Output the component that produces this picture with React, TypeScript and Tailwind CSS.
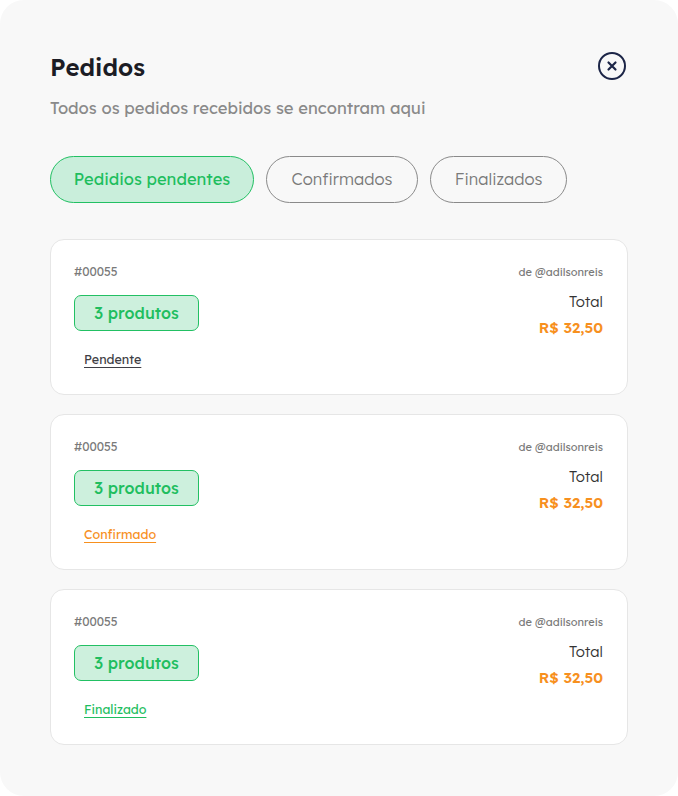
import React from "react";

type Status = "pendente" | "confirmado" | "finalizado";

const ORDERS: { id: string; user: string; items: number; total: string; status: Status }[] = [
  { id: "#00055", user: "@adilsonreis", items: 3, total: "R$ 32,50", status: "pendente" },
  { id: "#00055", user: "@adilsonreis", items: 3, total: "R$ 32,50", status: "confirmado" },
  { id: "#00055", user: "@adilsonreis", items: 3, total: "R$ 32,50", status: "finalizado" },
];

const STATUS_LABEL: Record<Status, string> = {
  pendente: "Pendente",
  confirmado: "Confirmado",
  finalizado: "Finalizado",
};

const STATUS_CLASS: Record<Status, string> = {
  pendente: "text-[#3f3f46]",
  confirmado: "text-[#f7901e]",
  finalizado: "text-[#1fbe5f]",
};

function CloseIcon() {
  return (
    <svg width="30" height="30" viewBox="0 0 30 30" fill="none">
      <circle cx="15" cy="15" r="13" stroke="#1c2547" strokeWidth="2" />
      <path d="M11.5 11.5l7 7M18.5 11.5l-7 7" stroke="#1c2547" strokeWidth="2.2" strokeLinecap="round" />
    </svg>
  );
}

function OrderCard({ order }: { order: (typeof ORDERS)[number] }) {
  return (
    <div className="flex justify-between rounded-[14px] border border-[#e6e6e6] bg-white pl-[23px] pr-6 pt-[24px] pb-[27px]">
      {/* Left */}
      <div className="flex flex-col items-start">
        <span className="text-[12px] leading-4 text-[#7a7a7a]">{order.id}</span>

        <div className="mt-[15px] flex h-9 w-[125px] items-center justify-center rounded-[7px] border border-[#22c063] bg-[#cdf0dd] text-[16px] font-medium text-[#1fbe5f]">
          {order.items} produtos
        </div>

        <span className={`mt-[20px] ml-[10px] text-[12.5px] leading-4 underline underline-offset-[3px] ${STATUS_CLASS[order.status]}`}>
          {STATUS_LABEL[order.status]}
        </span>
      </div>

      {/* Right */}
      <div className="flex flex-col items-end">
        <span className="text-[11px] leading-4 text-[#7a7a7a]">de {order.user}</span>
        <span className="mt-[12px] text-[15px] font-light leading-5 text-[#333]">Total</span>
        <span className="mt-[6px] text-[15px] font-semibold leading-5 text-[#f7901e]">{order.total}</span>
      </div>
    </div>
  );
}

export default function App() {
  return (
    <div className="min-h-[796px] w-[678px] bg-white font-['Lexend','Inter',sans-serif]">
      <div className="flex min-h-[796px] flex-col rounded-[24px] bg-[#f8f8f8] px-[50px] pt-[50px] pb-[50px]">
        {/* Header */}
        <div className="flex items-start justify-between">
          <h1 className="mt-[1px] text-[24px] font-semibold leading-8 text-[#1c1c24]">Pedidos</h1>
          <div className="mr-[1px] mt-[1px]">
            <CloseIcon />
          </div>
        </div>

        <p className="mt-[13px] text-[16.6px] leading-6 text-[#8a8a8a]">
          Todos os pedidos recebidos se encontram aqui
        </p>

        {/* Tabs */}
        <div className="mt-[36px] flex gap-3">
          <button className="h-[47px] w-[204px] rounded-full border border-[#22c063] bg-[#c9eedb] text-[16.5px] text-[#1fbe5f]">
            Pedidios pendentes
          </button>
          <button className="h-[47px] w-[152px] rounded-full border border-[#8a8a8a] text-[16.5px] font-light text-[#7a7a7a]">
            Confirmados
          </button>
          <button className="h-[47px] w-[137px] rounded-full border border-[#8a8a8a] text-[16.5px] font-light text-[#7a7a7a]">
            Finalizados
          </button>
        </div>

        {/* Orders */}
        <div className="mt-[36px] flex flex-col gap-[19px]">
          {ORDERS.map((o, i) => (
            <OrderCard key={i} order={o} />
          ))}
        </div>
      </div>
    </div>
  );
}
